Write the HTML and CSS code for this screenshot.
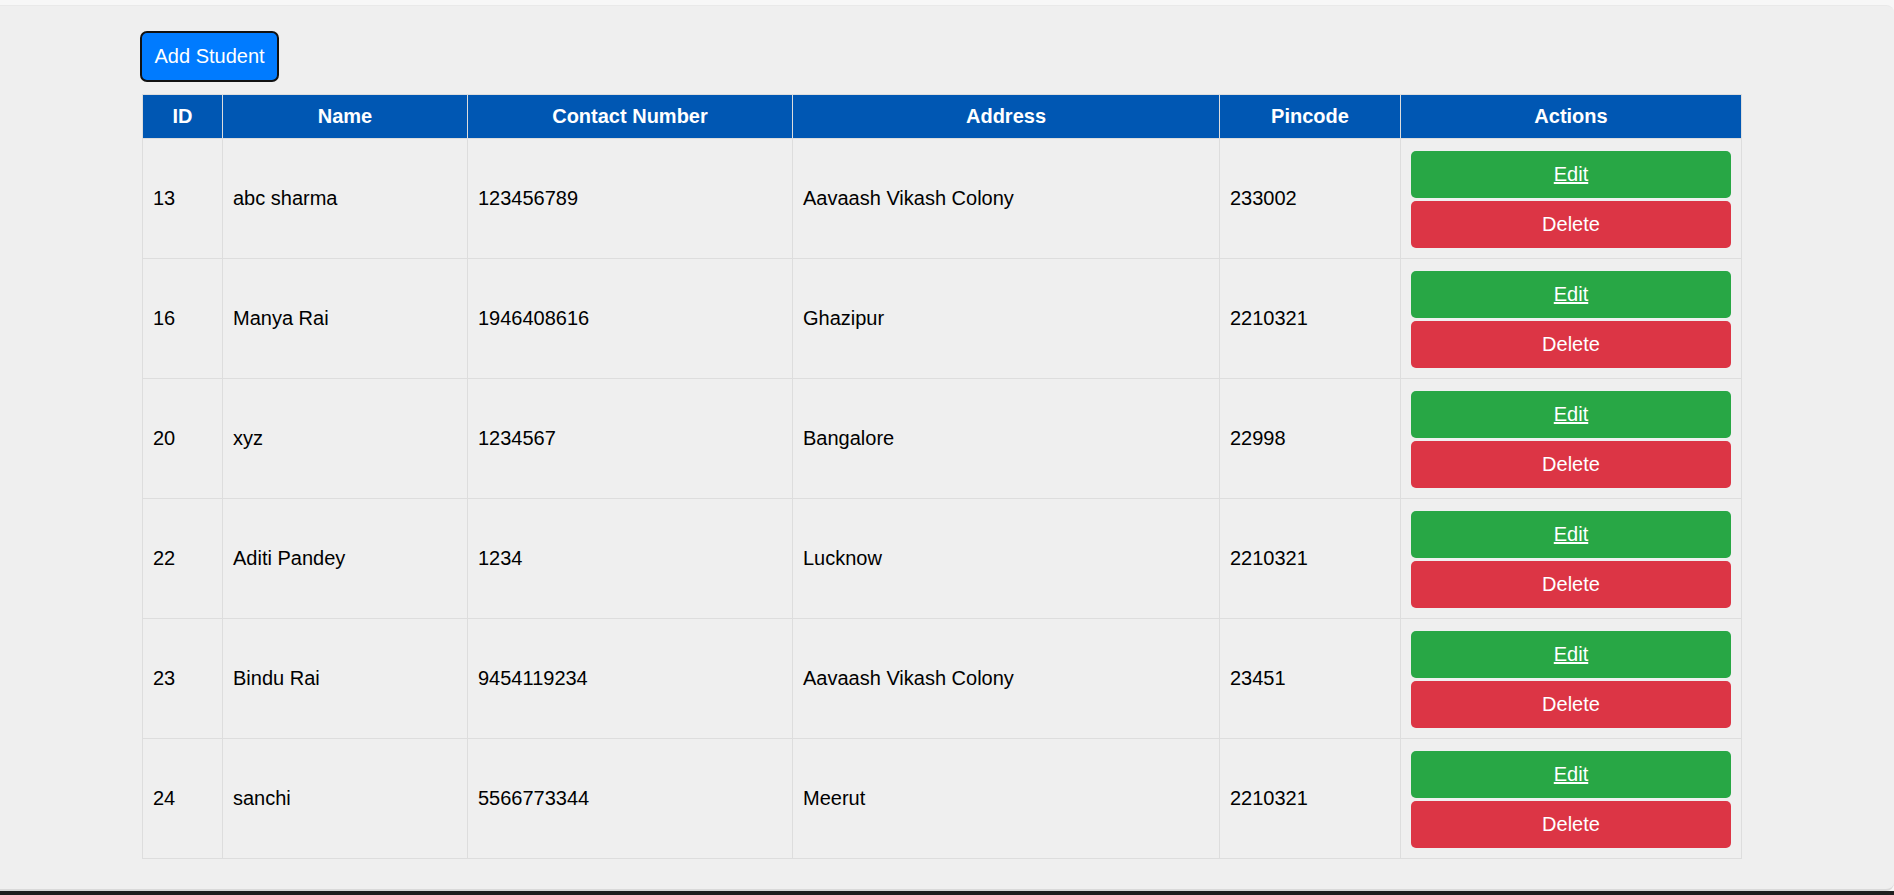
FILE: index.html
```html
<!DOCTYPE html>
<html lang="en">
<head>
<meta charset="utf-8">
<title>Students</title>
<link rel="stylesheet" href="styles.css">
</head>
<body>
<div class="frame">
  <div class="content">
    <button class="add-btn" type="button">Add Student</button>
    <table class="students">
      <colgroup>
        <col class="c-id"><col class="c-name"><col class="c-contact"><col class="c-address"><col class="c-pin"><col class="c-actions">
      </colgroup>
      <thead>
        <tr><th>ID</th><th>Name</th><th>Contact Number</th><th>Address</th><th>Pincode</th><th>Actions</th></tr>
      </thead>
      <tbody>
        <tr><td>13</td><td>abc sharma</td><td>123456789</td><td>Aavaash Vikash Colony</td><td>233002</td>
          <td class="actions"><div class="action-stack"><a class="btn-edit" href="#">Edit</a><button class="btn-delete" type="button">Delete</button></div></td></tr>
        <tr><td>16</td><td>Manya Rai</td><td>1946408616</td><td>Ghazipur</td><td>2210321</td>
          <td class="actions"><div class="action-stack"><a class="btn-edit" href="#">Edit</a><button class="btn-delete" type="button">Delete</button></div></td></tr>
        <tr><td>20</td><td>xyz</td><td>1234567</td><td>Bangalore</td><td>22998</td>
          <td class="actions"><div class="action-stack"><a class="btn-edit" href="#">Edit</a><button class="btn-delete" type="button">Delete</button></div></td></tr>
        <tr><td>22</td><td>Aditi Pandey</td><td>1234</td><td>Lucknow</td><td>2210321</td>
          <td class="actions"><div class="action-stack"><a class="btn-edit" href="#">Edit</a><button class="btn-delete" type="button">Delete</button></div></td></tr>
        <tr><td>23</td><td>Bindu Rai</td><td>9454119234</td><td>Aavaash Vikash Colony</td><td>23451</td>
          <td class="actions"><div class="action-stack"><a class="btn-edit" href="#">Edit</a><button class="btn-delete" type="button">Delete</button></div></td></tr>
        <tr><td>24</td><td>sanchi</td><td>5566773344</td><td>Meerut</td><td>2210321</td>
          <td class="actions"><div class="action-stack"><a class="btn-edit" href="#">Edit</a><button class="btn-delete" type="button">Delete</button></div></td></tr>
      </tbody>
    </table>
  </div>
</div>
<div class="taskbar"></div>
</body>
</html>
```
FILE: styles.css
```css
html, body {
  margin: 0;
  padding: 0;
}
body {
  background: #f7f7f7;
  height: 895px;
  overflow: hidden;
  font-family: "Liberation Sans", Arial, sans-serif;
  font-size: 20px;
  color: #000;
}
.frame {
  margin-top: 5px;
  height: 886px;
  background: #efefef;
  border-top: 1px solid #e9e9e9;
  border-bottom: 2px solid #d9d9d9;
  box-sizing: border-box;
  border-radius: 0 8px 8px 0;
}
.content {
  padding: 25px 0 0 140px;
}
.add-btn {
  display: block;
  white-space: nowrap;
  font-family: "Liberation Sans", Arial, sans-serif;
  font-size: 20px;
  line-height: 23px;
  color: #fff;
  background: #007bff;
  border: 2px solid #111;
  border-radius: 7px;
  padding: 12px 12.5px;
  height: 51px;
  box-sizing: border-box;
  cursor: pointer;
}
.students {
  margin: 12px 0 0 2px;
  width: 1599px;
  table-layout: fixed;
  border-collapse: collapse;
}
.c-id { width: 80px; }
.c-name { width: 245px; }
.c-contact { width: 325px; }
.c-address { width: 427px; }
.c-pin { width: 181px; }
.c-actions { width: 341px; }
.students th {
  background: #0057b3;
  color: #fff;
  font-weight: bold;
  font-size: 20px;
  line-height: 23px;
  padding: 10px;
  border: 1px solid #dddddd;
  text-align: center;
}
.students td {
  border: 1px solid #dddddd;
  padding: 10px;
  line-height: 23px;
  height: 99px;
  box-sizing: border-box;
  vertical-align: middle;
  text-align: left;
}
.students td.actions {
  padding: 12px 10px 10px;
}
.action-stack {
  display: flex;
  flex-direction: column;
  gap: 3px;
}
.btn-edit, .btn-delete {
  display: block;
  box-sizing: border-box;
  width: 100%;
  height: 47px;
  padding: 12px 0;
  border: none;
  border-radius: 5px;
  color: #fff;
  font-family: "Liberation Sans", Arial, sans-serif;
  font-size: 20px;
  line-height: 23px;
  text-align: center;
}
.btn-edit {
  background: #28a745;
  text-decoration: underline;
}
.btn-delete {
  background: #dc3545;
  cursor: pointer;
}
.taskbar {
  height: 4px;
  background: #1f1f1f;
}
```
